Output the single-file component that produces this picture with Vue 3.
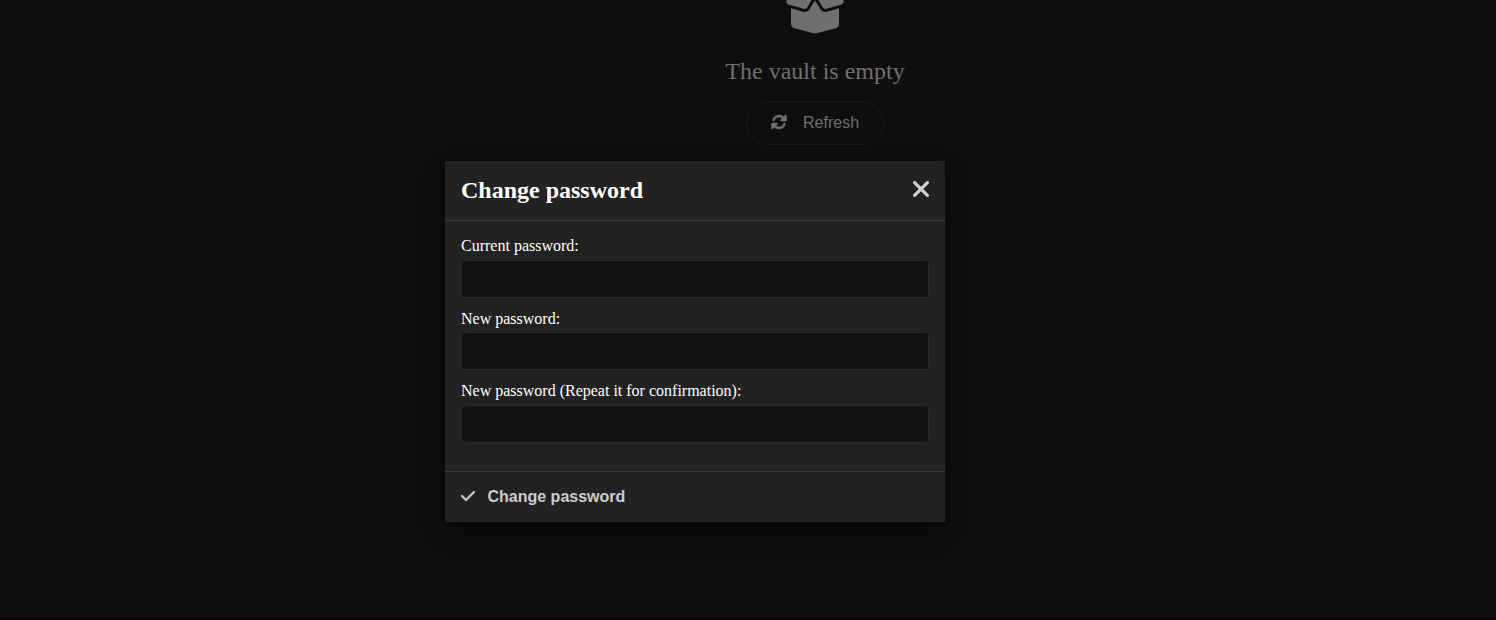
<script setup>
import { ref } from 'vue'

const fields = ref([
  { id: 'current', label: 'Current password:', value: '' },
  { id: 'new', label: 'New password:', value: '' },
  { id: 'repeat', label: 'New password (Repeat it for confirmation):', value: '' },
])
</script>

<template>
  <div class="page">
    <main class="vault">
      <svg class="box-icon" viewBox="0 0 640 512">
        <path d="M58.9 42.1c3-6.1 9.6-9.6 16.3-8.7L320 64 564.8 33.4c6.7-.8 13.3 2.7 16.3 8.7l41.7 83.4c9 17.9-.6 39.6-19.8 45.1L439.6 217.3c-13.9 4-28.8-1.9-36.2-14.3L320 64 236.6 203c-7.4 12.4-22.3 18.3-36.2 14.3L37.1 170.6c-19.3-5.5-28.8-27.2-19.8-45.1L58.9 42.1zM321.1 128l54.9 91.4c14.9 24.8 44.6 36.6 72.5 28.6L576 211.6v167c0 22-15 41.2-36.4 46.6l-204.1 51c-10.2 2.6-20.9 2.6-31 0l-204.1-51C79 419.7 64 400.5 64 378.5v-167L191.6 248c27.8 8 57.6-3.8 72.5-28.6L318.9 128h2.2z" />
      </svg>
      <div class="vault-title">The vault is empty</div>
      <button class="refresh" type="button">
        <svg class="refresh-icon" viewBox="0 0 512 512">
          <path d="M449.9 39.96l-48.5 48.53C362.5 53.19 311.4 32 256 32C161.5 32 78.59 92.34 49.58 182.2c-5.438 16.81 3.797 34.88 20.61 40.28c16.89 5.5 34.88-3.812 40.3-20.59C130.9 138.5 189.4 96 256 96c37.96 0 73 14.18 100.2 37.8L311.1 178C295.1 194.8 306.8 223.4 330.4 224h146.9C487.7 223.7 496 215.3 496 204.9V59.04C496 34.99 466.9 22.95 449.9 39.96zM441.8 289.6c-16.94-5.438-34.88 3.812-40.3 20.59C381.1 373.5 322.6 416 256 416c-37.96 0-73-14.18-100.2-37.8L200 334C216.9 317.2 205.2 288.6 181.6 288H34.66C24.32 288.3 16 296.7 16 307.1v145.9c0 24.04 29.07 36.08 46.07 19.07l48.5-48.53C149.5 458.8 200.6 480 255.1 480c94.45 0 177.4-60.34 206.4-150.2C467.9 313 458.6 294.1 441.8 289.6z" />
        </svg>
        <span>Refresh</span>
      </button>
    </main>

    <form class="modal" @submit.prevent>
      <header class="modal-head">
        <h2>Change password</h2>
        <button class="close" type="button" aria-label="Close">
          <svg viewBox="0 0 320 320">
            <path d="M310.6 54.6c12.5-12.5 12.5-32.8 0-45.3s-32.8-12.5-45.3 0L160 114.7 54.6 9.4c-12.5-12.5-32.8-12.5-45.3 0s-12.5 32.8 0 45.3L114.7 160 9.4 265.4c-12.5 12.5-12.5 32.8 0 45.3s32.8 12.5 45.3 0L160 205.3 265.4 310.6c12.5 12.5 32.8 12.5 45.3 0s12.5-32.8 0-45.3L205.3 160 310.6 54.6z" />
          </svg>
        </button>
      </header>
      <div class="modal-body">
        <div v-for="f in fields" :key="f.id" class="field">
          <label :for="f.id">{{ f.label }}</label>
          <input :id="f.id" v-model="f.value" type="password" />
        </div>
      </div>
      <footer class="modal-foot">
        <button class="submit" type="submit">
          <svg viewBox="0 0 448 512">
            <path d="M438.6 105.4c12.5 12.5 12.5 32.8 0 45.3l-256 256c-12.5 12.5-32.8 12.5-45.3 0l-128-128c-12.5-12.5-12.5-32.8 0-45.3s32.8-12.5 45.3 0L160 338.7 393.4 105.4c12.5-12.5 32.8-12.5 45.3 0z" />
          </svg>
          <span>Change password</span>
        </button>
      </footer>
    </form>
  </div>
</template>

<style>
body {
  background: #0e0e0e;
  overflow: hidden;
}
</style>

<style scoped>
.page {
  position: relative;
  box-sizing: border-box;
  height: 620px;
  overflow: hidden;
  background: #0e0e0e;
  border-bottom: 3px solid #090507;
  font-family: "Liberation Serif", "Times New Roman", serif;
}
button {
  font-family: "Liberation Sans", Arial, sans-serif;
  font-size: 16px;
  background: none;
  border: none;
  padding: 0;
  display: flex;
  align-items: center;
}
svg {
  display: block;
  fill: currentColor;
}
.vault {
  display: flex;
  flex-direction: column;
  align-items: center;
  margin-left: 134px;
  margin-top: -12px;
  color: #6f6f6f;
}
.box-icon {
  width: 60px;
  height: 49px;
  overflow: visible;
}
.vault-title {
  margin-top: 20px;
  font-size: 24px;
  line-height: 28px;
}
.refresh {
  box-sizing: border-box;
  width: 138px;
  height: 44px;
  margin-top: 16px;
  padding-left: 24px;
  gap: 16px;
  border: 1px solid #191919;
  border-radius: 22px;
  color: #6f6f6f;
}
.refresh-icon {
  width: 16px;
  height: 16px;
  margin-bottom: 2px;
  stroke: currentColor;
  stroke-width: 18;
}
.modal {
  position: absolute;
  left: 445px;
  top: 161px;
  width: 500px;
  height: 361px;
  display: flex;
  flex-direction: column;
  background: #222;
  box-shadow: 0 8px 20px rgba(0, 0, 0, 0.5);
}
.modal-head {
  box-sizing: border-box;
  height: 60px;
  padding: 0 16px;
  display: flex;
  align-items: center;
  justify-content: space-between;
  border-bottom: 1px solid #3a3a3a;
}
h2 {
  margin: 0 0 2px;
  font-size: 24px;
  line-height: 28px;
  color: #fff;
}
.close {
  color: #d0d0d0;
  margin-bottom: 3px;
}
.close svg {
  width: 16px;
  height: 16px;
}
.modal-body {
  flex: 1;
  padding: 16px 16px 0;
}
.field {
  height: 72.4px;
}
label {
  display: block;
  font-size: 16px;
  line-height: 18px;
  padding-top: 0.3px;
  margin-bottom: 4.7px;
  color: #fff;
}
input {
  display: block;
  box-sizing: border-box;
  width: 100%;
  height: 38px;
  padding: 0 8px;
  color: #fff;
  background: #121212;
  border: 1px solid #2a2a2a;
  border-radius: 4px;
  outline: none;
}
.modal-foot {
  box-sizing: border-box;
  height: 51px;
  padding: 0 16px;
  display: flex;
  align-items: center;
  border-top: 1px solid #3a3a3a;
}
.submit {
  gap: 12.5px;
  font-weight: bold;
  color: #ccc;
}
.submit svg {
  width: 14px;
  height: 16px;
  margin-bottom: 2px;
  stroke: currentColor;
  stroke-width: 10;
}
</style>
